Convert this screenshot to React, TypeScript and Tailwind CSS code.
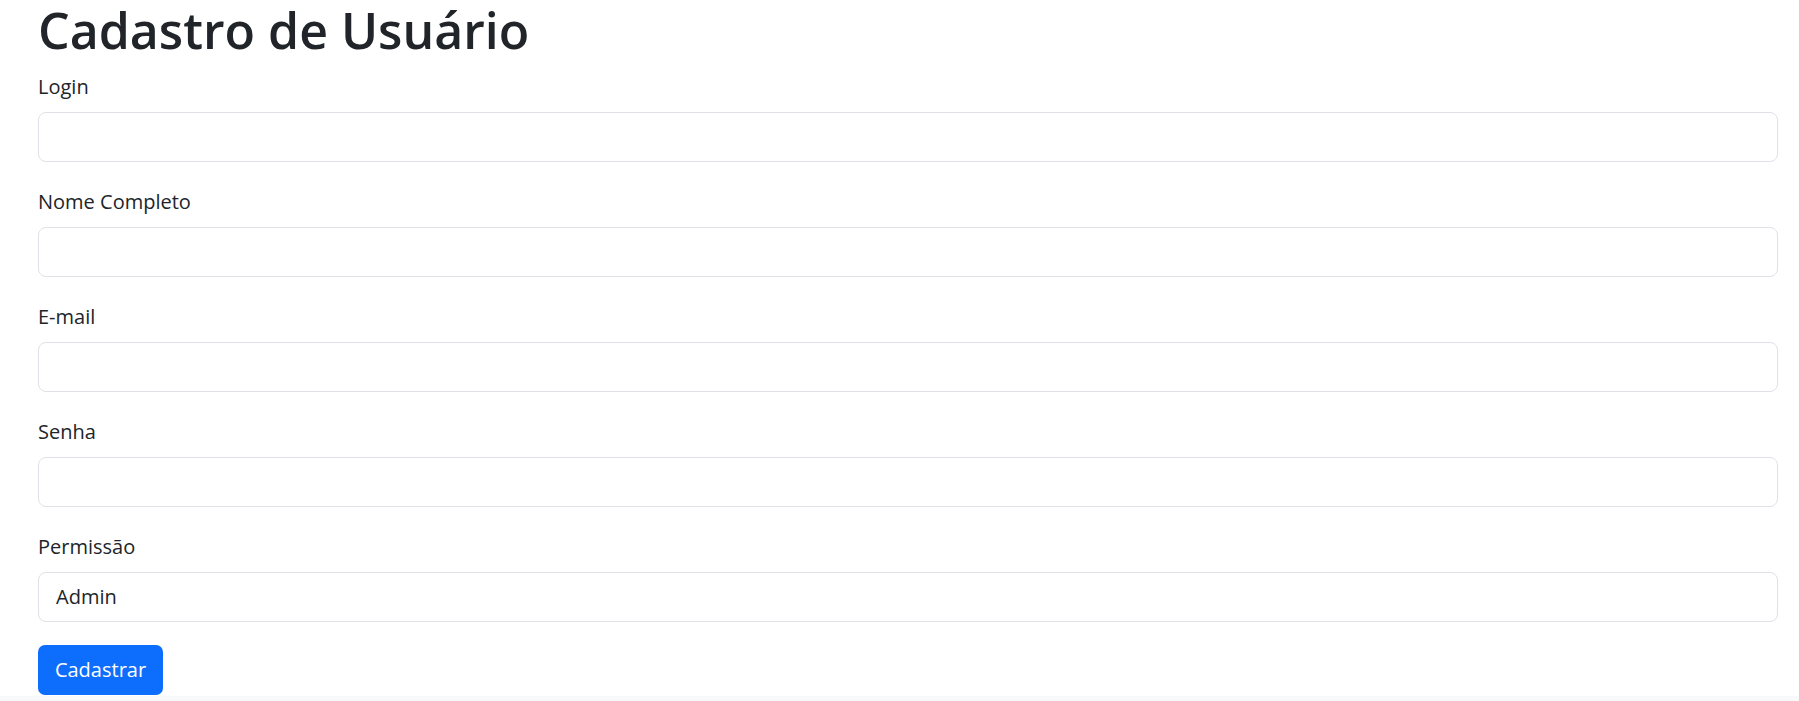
import { FC } from "react";

interface FieldProps {
  label: string;
  type?: string;
}

const Field: FC<FieldProps> = ({ label, type = "text" }) => {
  return (
    <div className="mb-[25px]">
      <label className="block text-[20px] leading-[30px] mb-[10px] text-[#212529]">{label}</label>
      <input
        type={type}
        className="block w-full h-[50px] px-[17px] text-[20px] bg-white border border-[#dee2e6] rounded-[8px] outline-none"
      />
    </div>
  );
};

export default function App() {
  return (
    <div className="min-h-[701px] bg-white font-['Open_Sans',sans-serif] text-[#212529]">
      <div className="pl-[38px] pr-[21px] pt-px">
        <h1 className="text-[50px] leading-[70px] font-semibold -mt-[6px] mb-[7px]">Cadastro de Usuário</h1>
        <form>
          <Field label="Login" />
          <Field label="Nome Completo" />
          <Field label="E-mail" type="email" />
          <Field label="Senha" type="password" />
          <div className="mb-[23px]">
            <label className="block text-[20px] leading-[30px] mb-[10px]">Permissão</label>
            <select className="block w-full h-[50px] pl-[17px] text-[20px] text-[#212529] bg-white border border-[#dee2e6] rounded-[8px] appearance-none outline-none">
              <option>Admin</option>
              <option>Usuário</option>
            </select>
          </div>
          <button
            type="button"
            className="w-[125px] h-[50px] mb-px text-[20px] text-white bg-[#0d6efd] rounded-[7px]"
          >
            Cadastrar
          </button>
        </form>
      </div>
      <div className="h-[40px] bg-[#f8f9fa]" />
    </div>
  );
}
